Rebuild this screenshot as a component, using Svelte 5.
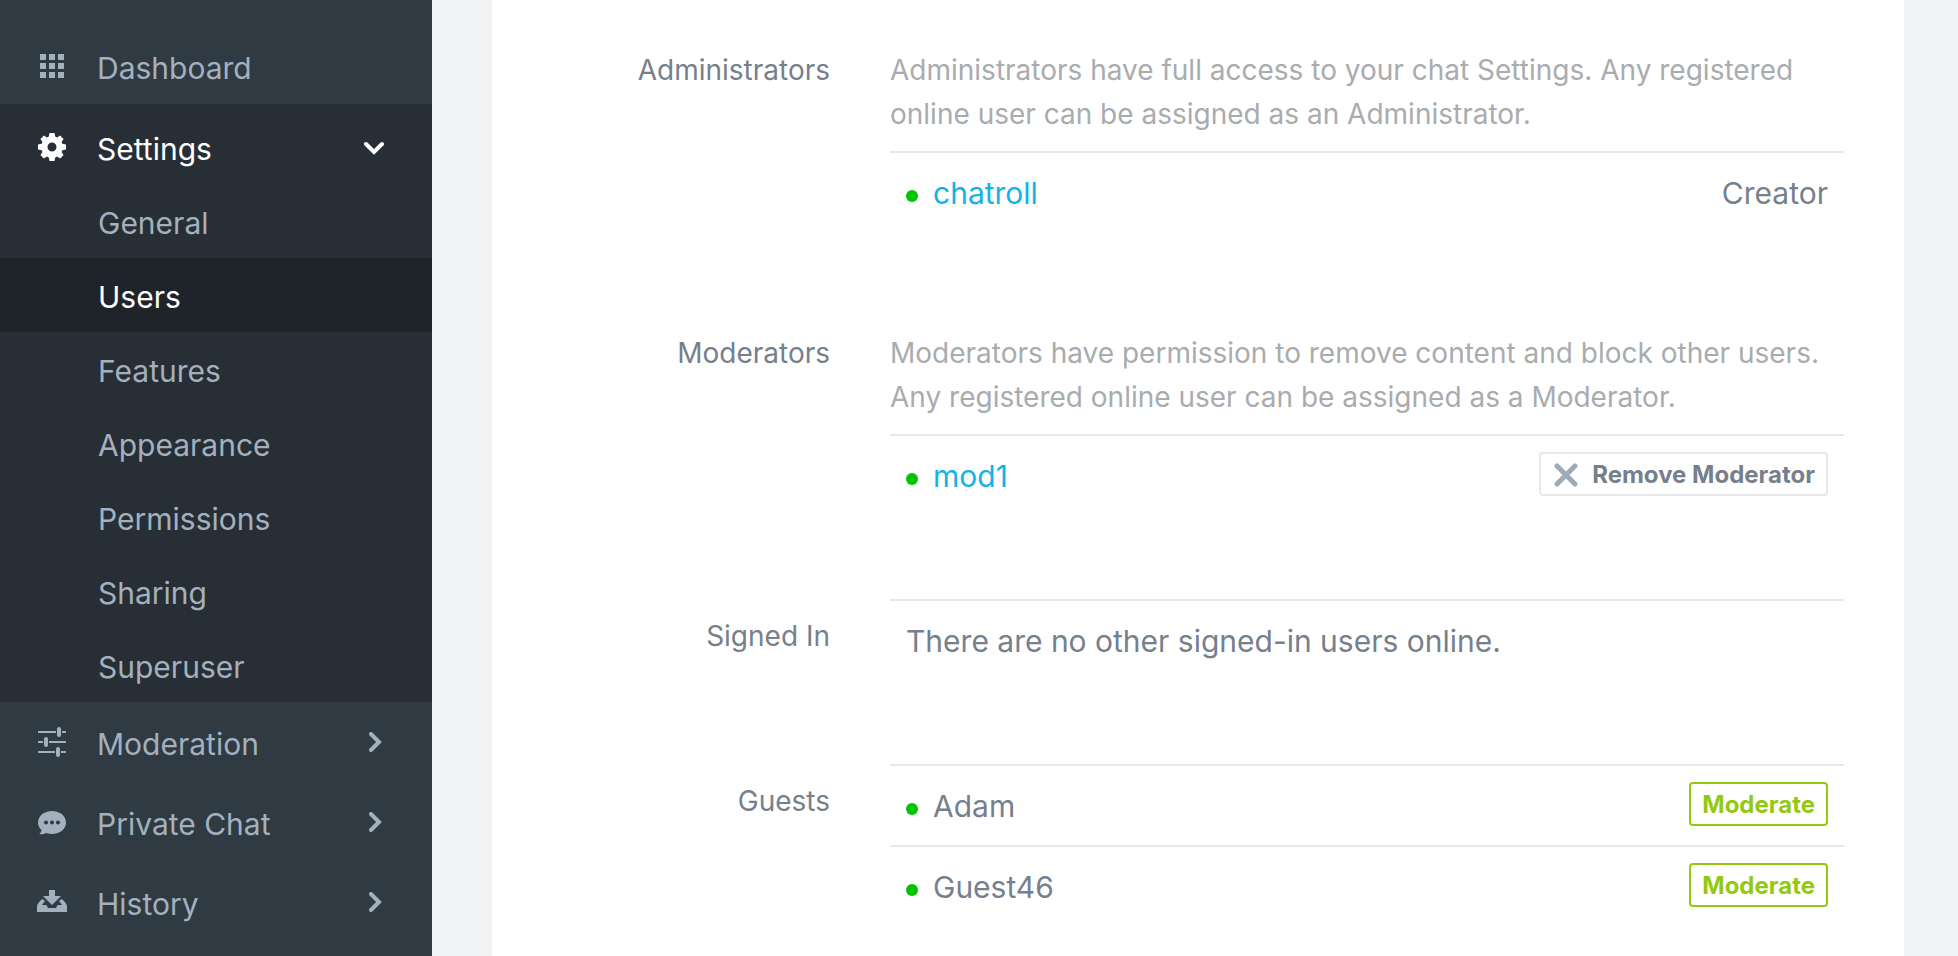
<script>
  const subItems = ['General', 'Users', 'Features', 'Appearance', 'Permissions', 'Sharing', 'Superuser']
  const guests = ['Adam', 'Guest46']

  let settingsOpen = true
  let current = 'Users'
</script>

{#snippet chevron()}
  <svg class="chevron" width="20" height="20" viewBox="0 0 20 20" aria-hidden="true">
    <path d="M7 2 L15 10 L7 18" />
  </svg>
{/snippet}

<div class="page">
  <nav class="sidebar" aria-label="Main">
    <a class="nav-item first" href="#dashboard">
      <svg class="icon" viewBox="0 0 30 30" aria-hidden="true">
        <path d="M3 3h6v6H3z M12 3h6v6h-6z M21 3h6v6h-6z M3 12h6v6H3z M12 12h6v6h-6z M21 12h6v6h-6z M3 21h6v6H3z M12 21h6v6h-6z M21 21h6v6h-6z" />
      </svg>
      <span class="nav-label">Dashboard</span>
    </a>

    <div class="group">
      <button class="nav-item open" aria-expanded={settingsOpen} on:click={() => (settingsOpen = !settingsOpen)}>
        <svg class="icon" viewBox="0 0 30 30" aria-hidden="true">
          <path
            fill-rule="evenodd"
            d="M12.500 1h5l.7 3.600 1.900.8 3-2 3.500 3.500-2 3 .8 1.900 3.600.7v5l-3.600.7-.8 1.900 2 3-3.500 3.500-3-2-1.900.8-.7 3.600h-5l-.7-3.600-1.900-.8-3 2-3.500-3.500 2-3-.8-1.900L1 17.500v-5l3.600-.7.8-1.900-2-3 3.500-3.500 3 2 1.900-.8z M15 10.500a4.500 4.500 0 1 0 0 9a4.500 4.500 0 1 0 0-9z"
          />
        </svg>
        <span class="nav-label">Settings</span>
        {@render chevron()}
      </button>
      {#if settingsOpen}
        <div class="sub">
          {#each subItems as item}
            <a
              class="sub-item"
              class:active={item === current}
              href="#{item.toLowerCase()}"
              on:click={() => (current = item)}>{item}</a>
          {/each}
        </div>
      {/if}
    </div>

    <a class="nav-item" href="#moderation">
      <svg class="icon" viewBox="0 0 30 30" aria-hidden="true">
        <path d="M1 4h18v2H1z M25 4h4v2h-4z M1 14h5v2H1z M12 14h17v2H12z M1 24h17v2H1z M24 24h5v2h-5z" />
        <rect x="20" y="0" width="4" height="10" rx="2" />
        <rect x="7" y="10" width="4" height="10" rx="2" />
        <rect x="19" y="20" width="4" height="10" rx="2" />
      </svg>
      <span class="nav-label">Moderation</span>
      {@render chevron()}
    </a>
    <a class="nav-item" href="#private-chat">
      <svg class="icon" viewBox="0 0 30 30" aria-hidden="true">
        <path
          fill-rule="evenodd"
          d="M15 4C23 4 29 9 29 15.500S23 27 15 27c-2 0-4-.4-5.700-1.100C7.500 26.900 5 27.400 2.300 27.200C3.600 26 4.300 24.500 4.500 23C2.300 21 1 18.400 1 15.500C1 9 7 4 15 4z M9 13.500a2 2 0 1 0 0 4a2 2 0 1 0 0-4z M15 13.500a2 2 0 1 0 0 4a2 2 0 1 0 0-4z M21 13.500a2 2 0 1 0 0 4a2 2 0 1 0 0-4z"
        />
      </svg>
      <span class="nav-label">Private Chat</span>
      {@render chevron()}
    </a>
    <a class="nav-item" href="#history">
      <svg class="icon" viewBox="0 0 30 30" aria-hidden="true">
        <path d="M12 3h6v6h6l-9 9l-9-9h6z" />
        <path d="M5.500 12L8 14l-3 4h4.500l1.500 3h8l1.500-3H25l-3-4l2.500-2C27 13.500 29 16 30 18.500V25H0v-6.500C1 16 3 13.500 5.500 12z" />
      </svg>
      <span class="nav-label">History</span>
      {@render chevron()}
    </a>
  </nav>

  <main class="content">
    <div class="card">
      <section class="row">
        <h2>Administrators</h2>
        <div class="field">
          <p class="desc">
            Administrators have full access to your chat Settings. Any registered online user can be assigned as an Administrator.
          </p>
          <div class="user">
            <span class="dot"></span>
            <a class="name" href="#chatroll">chatroll</a>
            <span class="role">Creator</span>
          </div>
        </div>
      </section>

      <section class="row">
        <h2>Moderators</h2>
        <div class="field">
          <p class="desc">
            Moderators have permission to remove content and block other users. Any registered online user can be assigned as a Moderator.
          </p>
          <div class="user">
            <span class="dot"></span>
            <a class="name" href="#mod1">mod1</a>
            <button class="btn">
              <svg width="24" height="24" viewBox="0 0 24 24" aria-hidden="true">
                <path d="M3 3 L21 21 M21 3 L3 21" />
              </svg>
              Remove Moderator
            </button>
          </div>
        </div>
      </section>

      <section class="row">
        <h2>Signed In</h2>
        <div class="field">
          <div class="user">There are no other signed-in users online.</div>
        </div>
      </section>

      <section class="row">
        <h2>Guests</h2>
        <div class="field">
          {#each guests as guest}
            <div class="user">
              <span class="dot"></span>
              <span class="name">{guest}</span>
              <button class="btn green">Moderate</button>
            </div>
          {/each}
        </div>
      </section>
    </div>
  </main>
</div>

<style>
  :global(body) { background: #f1f3f5; }
  .page {
    display: flex; min-height: 100vh;
    font-family: Inter, "Open Sans", sans-serif; font-size: 30px; color: #76808c;
  }

  .sidebar { flex: 0 0 432px; background: #2f3a43; }
  .nav-item {
    display: flex; align-items: center; box-sizing: border-box; width: 100%; height: 80px;
    padding: 0 48px 0 37px; border: 0; background: none;
    font: inherit; color: #a3b1be; text-align: left; text-decoration: none; cursor: pointer;
  }
  .first { height: 104px; padding-top: 28px; }
  .open { padding-top: 6px; color: #fff; }
  .icon { width: 30px; height: 30px; margin-right: 30px; fill: currentColor; }
  .nav-label { flex: 1; padding-top: 3px; }
  .chevron { fill: none; stroke: currentColor; stroke-width: 4; stroke-linecap: round; }
  .open .chevron { transform: rotate(90deg); }
  .group { background: #272e36; }
  .sub-item {
    display: flex; align-items: center; box-sizing: border-box; height: 74px;
    padding: 3px 0 0 98px; color: #a3b1be; text-decoration: none;
  }
  .sub-item.active { background: #1f242b; color: #fff; }

  .content { flex: 1; padding: 0 54px 0 60px; }
  .card { box-sizing: border-box; min-height: 100%; padding: 33px 60px 0 0; background: #fff; }
  .row { display: flex; gap: 60px; }
  h2 {
    flex: 0 0 338px; margin: 0; padding-top: 15px; font-size: 28px; line-height: 44px;
    font-weight: 400; text-align: right;
  }
  .field { flex: 1; padding-bottom: 84px; }
  .row:last-child .field { padding-bottom: 0; }
  .desc { margin: 0; padding: 15px 0; font-size: 28px; line-height: 44px; color: #a9acaf; }
  .user {
    display: flex; align-items: flex-start; padding: 16px 16px 15px;
    border-top: 2px solid #e6e8e9; line-height: 48px;
  }
  .dot { width: 12px; height: 12px; margin: 21px 15px 0 0; border-radius: 50%; background: #00c400; }
  .name { flex: 1; }
  a.name { color: #12b3e6; text-decoration: none; }
  .btn {
    display: flex; align-items: center; gap: 14px; height: 44px; padding: 2px 11px 0;
    border: 2px solid #e6e8e9; border-radius: 4px; background: #fff;
    font: inherit; font-size: 24px; font-weight: 700; color: #76808c; cursor: pointer;
  }
  .btn svg { margin-left: 2px; fill: none; stroke: #9dabb8; stroke-width: 5; stroke-linecap: round; }
  .btn.green { border-color: #93c90e; color: #93c90e; }
</style>
